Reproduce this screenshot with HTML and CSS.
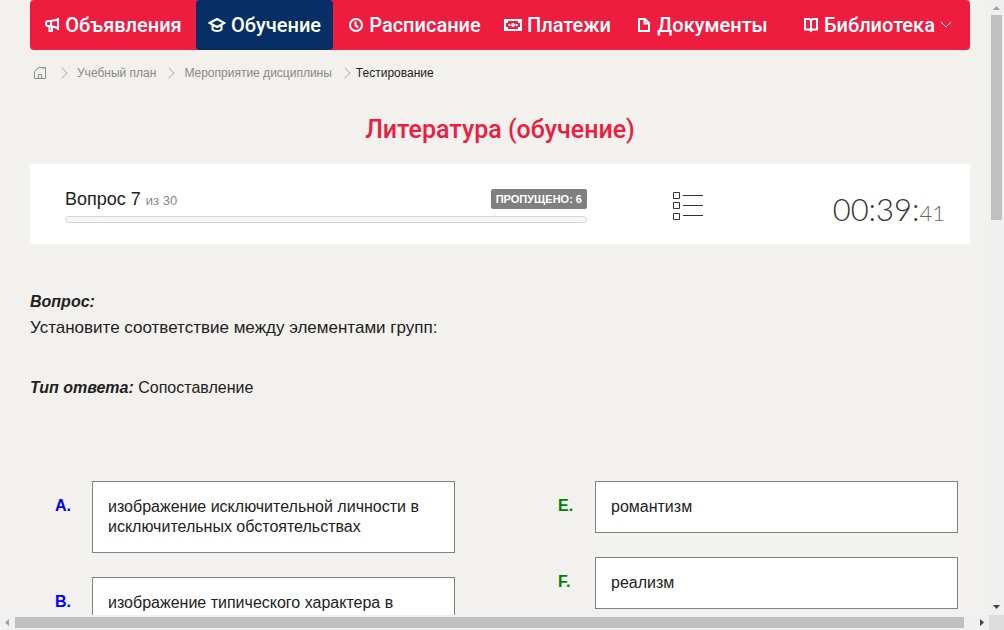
FILE: index.html
```html
<!DOCTYPE html>
<html lang="ru">
<head>
<meta charset="utf-8">
<title>Тестирование</title>
<link rel="stylesheet" href="styles.css">
</head>
<body>
<div class="window">
  <div class="page">
    <nav class="menu">
      <a class="menu-item" href="#">
        <svg class="menu-icon" viewBox="0 0 16 16"><path d="M14 1v12M14 2.500 7 4H4Q2 4 2 6.500T4 9h3l7 2M7 4v5M5.500 9v5h2.500V9.500"/></svg>
        <span>Объявления</span>
      </a>
      <a class="menu-item active" href="#">
        <svg class="menu-icon wide" viewBox="0 0 18 16"><path d="M1.500 6 9 2l7.500 4L9 10ZM4.500 8v4.500Q6 14 9 14t4.500-1.500V8"/></svg>
        <span>Обучение</span>
      </a>
      <a class="menu-item" href="#">
        <svg class="menu-icon" viewBox="0 0 16 16"><circle cx="8" cy="8" r="6"/><path d="M7.500 4.500V8L10 10.500"/></svg>
        <span>Расписание</span>
      </a>
      <a class="menu-item" href="#">
        <svg class="menu-icon wide" viewBox="0 0 18 16"><path d="M1 3h16v10H1Z"/><path class="solid" d="M2 4h2v2H2ZM14 4h2v2h-2ZM2 10h2v2H2ZM14 10h2v2h-2ZM4.500 7h2v2h-2ZM11.500 7h2v2h-2Z"/><circle class="solid" cx="9" cy="8" r="2"/></svg>
        <span>Платежи</span>
      </a>
      <a class="menu-item" href="#">
        <svg class="menu-icon" viewBox="0 0 16 16"><path d="M3 2h6l4 4v8H3ZM8.500 2v4.500H13"/></svg>
        <span>Документы</span>
      </a>
      <a class="menu-item" href="#">
        <svg class="menu-icon" viewBox="0 0 16 16"><path d="M2 2h4.500L8 3.500 9.500 2H14v10.500H9.500L8 14l-1.500-1.500H2ZM8 3v11"/></svg>
        <span>Библиотека</span>
        <svg class="menu-arrow" viewBox="0 0 12 8"><path d="m1 1 5 5 5-5"/></svg>
      </a>
    </nav>

    <ol class="crumbs">
      <li><a href="#" aria-label="Главная"><svg class="home" viewBox="0 0 14 14"><path d="M1.500 5.500v7h11v-11h-2v1L9 1.500H6ZM5.500 12.500V8.500h3v4"/></svg></a></li>
      <li><a href="#">Учебный план</a></li>
      <li><a href="#">Мероприятие дисциплины</a></li>
      <li class="current">Тестирование</li>
    </ol>

    <h1 class="title">Литература (обучение)</h1>

    <section class="status">
      <div class="question">
        <div class="question-head">
          <label class="counter" for="progress">Вопрос 7 <small>из 30</small></label>
          <span class="skipped">ПРОПУЩЕНО: 6</span>
        </div>
        <progress class="progress" id="progress" value="0" max="30"></progress>
      </div>
      <button class="list-button" type="button" aria-label="Список вопросов">
        <svg class="list-icon" viewBox="0 0 32 30"><path d="M1.500 1.500h6v6h-6ZM1.500 11.500h6v6h-6ZM1.500 22.500h6v6h-6ZM11 4.500h20M11 14.500h20M11 24.500h20"/></svg>
      </button>
      <div class="timer">00:39:<small>41</small></div>
    </section>

    <section class="task">
      <h2 class="caption">Вопрос:</h2>
      <p class="text">Установите соответствие между элементами групп:</p>
      <p class="type"><em class="caption">Тип ответа:</em> Сопоставление</p>
    </section>

    <section class="groups">
      <ul class="group">
        <li class="option"><b class="letter source">A.</b><div class="box">изображение исключительной личности в исключительных обстоятельствах</div></li>
        <li class="option"><b class="letter source">B.</b><div class="box">изображение типического характера в</div></li>
      </ul>
      <ul class="group">
        <li class="option"><b class="letter target">E.</b><div class="box">романтизм</div></li>
        <li class="option"><b class="letter target">F.</b><div class="box">реализм</div></li>
      </ul>
    </section>
  </div>

  <div class="bar bar-y">
    <svg class="arrow dim" viewBox="0 0 15 15"><path d="M4 10h7L7.500 6Z"/></svg>
    <div class="track"><div class="thumb"></div></div>
    <svg class="arrow" viewBox="0 0 15 15"><path d="M4 5h7L7.500 9Z"/></svg>
  </div>
  <div class="bar bar-x">
    <svg class="arrow dim" viewBox="0 0 15 15"><path d="M9 4v7L5 7.500Z"/></svg>
    <div class="track"><div class="thumb"></div></div>
    <svg class="arrow" viewBox="0 0 15 15"><path d="M6 4v7l4-3.500Z"/></svg>
  </div>
  <div class="corner"></div>
</div>
</body>
</html>
```

FILE: styles.css
```css
* { box-sizing: border-box; }

body {
  margin: 0;
  color: #222;
  background: #f3f1ee;
  font: 16px/20px "Liberation Sans", Arial, sans-serif;
}

h1, h2, p, ul, ol { margin: 0; padding: 0; }
ul, ol { list-style: none; }
a { color: inherit; text-decoration: none; }
svg { display: block; flex: none; fill: none; stroke: currentColor; }

.window {
  display: grid;
  grid-template: minmax(0, 1fr) 15px / minmax(0, 1fr) 15px;
  height: 100vh;
}

.page { overflow: hidden; padding: 0 19px 0 30px; }

.menu {
  display: grid;
  grid-template-columns: 166fr 137fr 163fr 123fr 166fr 185fr;
  border-radius: 4px;
  background: #ee1c3f;
  color: #fff;
  font: 500 20px/24px Roboto, sans-serif;
}

.menu-item {
  display: flex;
  align-items: center;
  justify-content: center;
  gap: 5px;
  height: 50px;
  border-radius: 4px;
  white-space: nowrap;
}

.menu-item.active { background: #082f65; }
.menu-icon { width: 16px; height: 16px; stroke-width: 2; }
.menu-icon.wide { width: 18px; }
.menu-item .solid { fill: currentColor; stroke: none; }
.menu-arrow { width: 12px; height: 8px; stroke-width: 1; }

.crumbs {
  display: flex;
  align-items: center;
  height: 46px;
  padding-left: 3px;
  color: #888;
  font-size: 12px;
}

.crumbs li { display: flex; align-items: center; }

.crumbs li + li::before {
  content: "";
  width: 7px;
  height: 7px;
  margin: 0 11px 0 9px;
  border: solid #bbb;
  border-width: 1px 1px 0 0;
  transform: rotate(45deg);
}

.crumbs .current { color: #222; }
.crumbs li.current::before { margin-right: 7px; }
.home { width: 14px; height: 14px; margin-right: 2px; }

.title {
  padding: 18px 0;
  color: #ee1c3f;
  text-align: center;
  font: 500 25px/32px Roboto, sans-serif;
}

.status {
  display: grid;
  grid-template-columns: 522fr 201fr 157fr;
  align-items: start;
  height: 80px;
  padding: 25px 25px 0 35px;
  background: #fff;
}

.question-head { display: flex; justify-content: space-between; height: 20px; }
.counter { font-size: 18px; }
.counter small { color: #888; font-size: 13px; }

.skipped {
  padding: 0 5px;
  border-radius: 2px;
  background: #808080;
  color: #fff;
  font-size: 11px;
  font-weight: bold;
}

.progress {
  display: block;
  width: 100%;
  height: 7px;
  margin-top: 7px;
  border: 1px solid #d8d8d8;
  border-radius: 4px;
  background: #f7f7f7;
  appearance: none;
}

.progress::-webkit-progress-bar { background: transparent; }

.list-button {
  justify-self: center;
  padding: 2px 0;
  border: 0;
  background: none;
  color: #333;
}

.list-icon { width: 32px; height: 30px; }

.timer {
  color: #333;
  text-align: right;
  font: 300 31px/40px Lato, sans-serif;
}

.timer small { color: #666; font-size: 22px; }

.task { padding-top: 48px; }
.caption { font-size: 16px; font-weight: bold; font-style: italic; }
.text { margin-top: 6px; font-size: 17px; }
.type { margin-top: 40px; }

.groups {
  display: grid;
  grid-template-columns: 1fr 1fr;
  gap: 66px;
  margin-top: 83px;
}

.group { display: grid; gap: 24px; align-content: start; padding: 0 12px 0 25px; }
.option { display: grid; grid-template-columns: 37px 1fr; }
.letter { padding-top: 15px; }
.source { color: #00f; }
.target { color: #008000; }
.box { padding: 15px; border: 1px solid #808080; background: #fff; }

.bar { display: flex; background: #f0f0f1; }
.bar-y { flex-direction: column; }
.track { display: flex; flex: 1; }
.bar-y .track { justify-content: center; }
.bar-x .track { align-items: center; }
.thumb { background: #c0c0c0; }
.bar-y .thumb { width: 11px; height: 35%; }
.bar-x .thumb { width: 99%; height: 11px; }
.arrow { width: 15px; height: 15px; color: #444; fill: currentColor; stroke: none; }
.arrow.dim { color: #a0a0a0; }
.corner { background: #dcdcdc; }
```
